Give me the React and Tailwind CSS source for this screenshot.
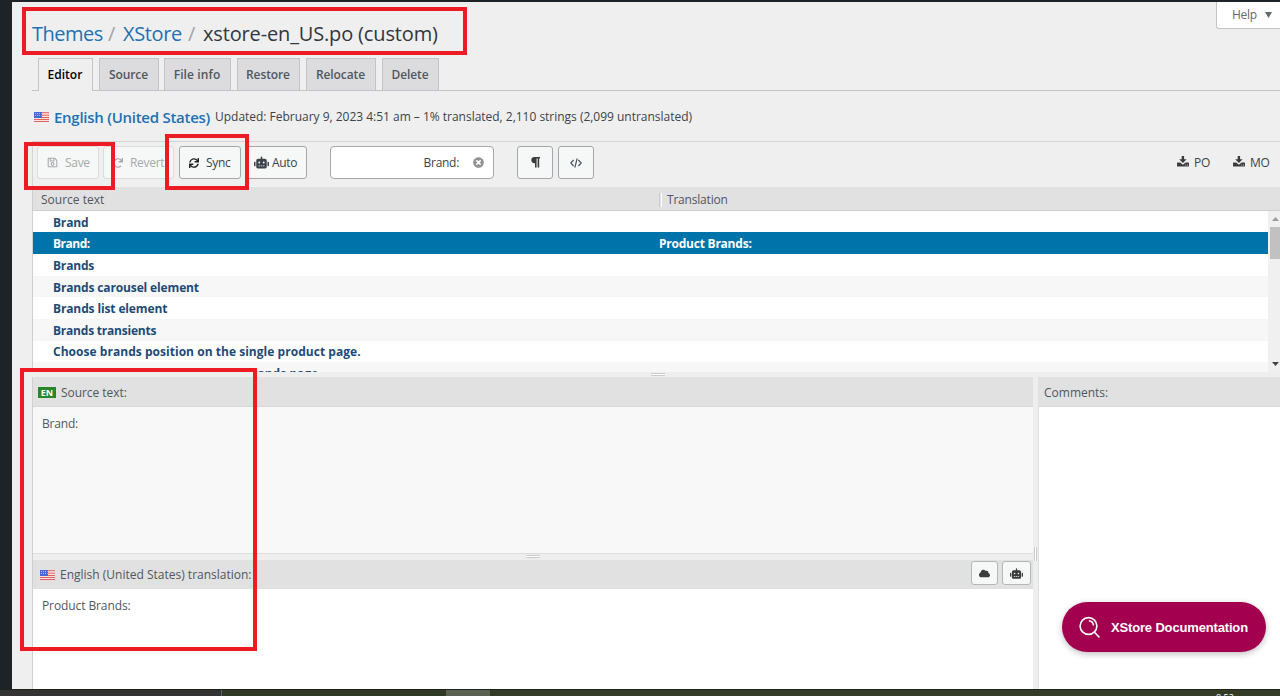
import React from "react";
import { FaRegSave, FaRedo, FaSync, FaRobot, FaTimesCircle, FaCloud } from "react-icons/fa";

function Flag() {
  return (
    <svg width="15" height="10" viewBox="0 0 15 10" className="block shrink-0">
      <rect width="15" height="10" fill="#f6e4e4" />
      <path d="M0 .7H15M0 3.2H15M0 5.5H15M0 7.5H15M0 9.5H15" stroke="#e2615c" strokeWidth="1" />
      <rect width="8" height="6" fill="#4668d8" />
      <path d="M1 1.5H7.5M1 3.5H7.5" stroke="#a9bcf5" strokeWidth="1" strokeDasharray="1 1" />
    </svg>
  );
}

function Download() {
  return (
    <svg width="12" height="11" viewBox="0 0 12 11" className="block shrink-0" fill="#3c3c3c">
      <path d="M4.7 0H7.1V3.2H9.6L5.9 7 2.2 3.2H4.7Z" />
      <path d="M.6 6.5H3.2L5.9 8.8 8.6 6.5H11.4Q12 6.5 12 7.1V10Q12 10.6 11.4 10.6H.6Q0 10.6 0 10V7.1Q0 6.5.6 6.5Z" />
      <path d="M8.3 9H9.2M10 9H10.9" stroke="#efefef" strokeWidth=".8" />
    </svg>
  );
}

const tabs = [
  ["Source", "w-[60px] ml-[6px] tracking-[-0.1px]"],
  ["File info", "w-[67px] ml-[5px] tracking-[0.1px]"],
  ["Restore", "w-[63px] ml-[6px] tracking-[-0.1px]"],
  ["Relocate", "w-[70px] ml-[6px] tracking-[-0.1px]"],
  ["Delete", "w-[57px] ml-[6px] tracking-[-0.1px]"],
];

const rows = [
  ["Brand", "h-[21px] bg-white tracking-[-0.19px] pt-[2px]"],
  ["Brand:", "h-[22px] bg-[#0073aa] text-white tracking-[-0.5px] pt-px", "tracking-[-0.23px]", "Product Brands:"],
  ["Brands", "h-[22px] bg-white tracking-[-0.19px] pt-px"],
  ["Brands carousel element", "h-[21px] bg-[#f7f7f7] tracking-[-0.14px] pt-[2px]"],
  ["Brands list element", "h-[22px] bg-white tracking-[-0.13px] pt-px"],
  ["Brands transients", "h-[22px] bg-[#f7f7f7] tracking-[-0.22px] pt-px"],
  ["Choose brands position on the single product page.", "h-[21px] bg-white tracking-[0.035px] pt-px"],
  ["Choose sidebar position for the brands page.", "h-[22px] bg-[#f7f7f7] tracking-[0.035px] pt-px"],
];

const btn = "flex items-center h-[33px] rounded-[3px] border bg-[#f6f7f7] text-[12px] shrink-0";

export default function App() {
  return (
    <div className="relative flex h-[696px] w-[1280px] flex-col overflow-hidden whitespace-nowrap bg-[#efefef] font-['Open_Sans','Noto_Sans',sans-serif] text-[12px] leading-none text-[#50575e]">
      <div className="h-[2px] shrink-0 bg-[#1d2327]" />
      <div className="flex h-[687px] shrink-0">
        <aside className="w-[12px] shrink-0 bg-[#1d2327]" />
        <main className="flex w-[1268px] flex-col pl-[20px]">
          <header className="flex h-[56px] shrink-0 justify-between">
            <h1 className="flex h-[64px] items-center text-[20px] text-[#32373c]">
              <span className="w-[76px] tracking-[-0.5px] text-[#2271b1]">Themes</span>
              <span className="w-[15px] text-[#a0a5aa]">/</span>
              <span className="w-[65px] tracking-[-0.35px] text-[#2271b1]">XStore</span>
              <span className="w-[15px] text-[#a0a5aa]">/</span>
              <span className="tracking-[-0.15px]">xstore-en_US.po (custom)</span>
            </h1>
            <div className="flex h-[27px] w-[64px] items-center gap-[8px] rounded-bl-[3px] border-b border-l border-[#c3c4c7] bg-white pl-[15px] text-[12px] tracking-[-0.3px] text-[#646970]">
              Help
              <svg width="7" height="6" viewBox="0 0 7 6" fill="#646970"><path d="M0 0H7L3.5 6Z" /></svg>
            </div>
          </header>
          <nav className="flex h-[33px] shrink-0 items-end border-b border-[#c3c4c7] pl-[6px] text-[12px] font-semibold">
            <div className="-mb-px flex h-[33px] w-[55px] items-center justify-center border border-b-0 border-[#c3c4c7] bg-[#efefef] pr-px text-black">Editor</div>
            {tabs.map(([t, c]) => (
              <div key={t} className={"flex h-[32px] items-center justify-center border border-b-0 border-[#c3c4c7] bg-[#dcdcde] pr-px " + c}>{t}</div>
            ))}
          </nav>
          <div className="flex h-[50px] shrink-0 items-center pb-0 pl-[2px] pt-[2px] text-[#3c434a]">
            <Flag />
            <span className="ml-[5px] w-[161px] text-[15px] font-semibold tracking-[-0.27px] text-[#2271b1]">English (United States)</span>
            <span className="text-[12px] tracking-[-0.015px]">Updated: February 9, 2023 4:51 am – 1% translated, 2,110 strings (2,099 untranslated)</span>
          </div>
          <div className="flex h-[46px] shrink-0 items-start border-l border-t border-[#d5d5d5] pl-[4px] pt-[4px] tracking-[-0.3px] text-[#3c434a]">
            <button className={btn + " w-[62px] gap-[7px] border-[#dcdcde] pl-[9px] text-[#a7aaad]"}><FaRegSave size={11} />Save</button>
            <button className={btn + " ml-[4px] w-[71px] gap-[7px] border-[#dcdcde] pl-[9px] text-[#a7aaad]"}><FaRedo size={10} />Revert</button>
            <button className={btn + " ml-[5px] w-[62px] gap-[7px] border-[#a5a7aa] pl-[9px]"}><FaSync size={10} className="text-[#222]" />Sync</button>
            <button className={btn + " ml-[4px] w-[62px] gap-[3px] border-[#a5a7aa] pl-[8px]"}><FaRobot size={15} />Auto</button>
            <div className="ml-[23px] flex h-[33px] w-[164px] shrink-0 items-center justify-end gap-[14px] rounded-[4px] border border-[#a5a7aa] bg-white pr-[9px]">Brand:<FaTimesCircle size={11} className="text-[#929292]" /></div>
            <button className={btn + " ml-[23px] w-[36px] justify-center border-[#a5a7aa]"}>
              <svg width="9" height="11" viewBox="0 0 9 11"><path fill="#3c3c3c" d="M9 0V1.4H8.2V10.5H6.6V1.4H5.6V10.5H4V6.2H3.4A3.1 3.1 0 0 1 3.4 0Z" /></svg>
            </button>
            <button className={btn + " ml-[5px] w-[36px] justify-center border-[#a5a7aa]"}>
              <svg width="12" height="10" viewBox="0 0 12 10" fill="none" stroke="#50575e" strokeWidth="1.2"><path d="M3.6 2L.8 5 3.6 8M8.4 2L11.2 5 8.4 8M7.2.5L4.8 9.5" /></svg>
            </button>
            <div className="ml-auto flex h-[33px] items-center pr-[10px]">
              <span className="pb-[3px]"><Download /></span>
              <span className="ml-[5px] w-[39px]">PO</span>
              <span className="pb-[3px]"><Download /></span>
              <span className="ml-[5px] w-[20px]">MO</span>
            </div>
          </div>
          <section className="flex h-[185px] shrink-0 flex-col border-l border-[#d0d0d0]">
            <div className="flex h-[24px] shrink-0 items-center border-b border-[#cfcfcf] bg-[#e1e1e1] pt-[3px]">
              <span className="w-[626px] pl-[8px]">Source text</span>
              <span className="mr-[5px] h-[14px] w-[3px] border-x border-l-[#ccc] border-r-white" />
              <span className="tracking-[-0.2px]">Translation</span>
            </div>
            <div className="flex h-[161px]">
              <div className="w-[1235px] shrink-0 overflow-hidden font-bold text-[#1d4b78]">
                {rows.map(([t, c, k, tr]) => (
                  <div key={t} className={"flex items-center text-[12px] " + c}>
                    <span className="w-[626px] pl-[20px]">{t}</span>
                    <span className={k}>{tr}</span>
                  </div>
                ))}
              </div>
              <div className="flex w-[12px] flex-col items-center bg-[#f0f0f0] pl-[2px] pt-[6px]">
                <svg width="7" height="4" viewBox="0 0 7 4" className="shrink-0" fill="#9b9b9b"><path d="M0 4H7L3.5 0Z" /></svg>
                <div className="mt-[6px] h-[32px] w-full shrink-0 bg-[#c1c1c1]" />
                <svg width="7" height="4" viewBox="0 0 7 4" className="mb-[6px] mt-auto shrink-0" fill="#444"><path d="M0 0H7L3.5 4Z" /></svg>
              </div>
            </div>
          </section>
          <div className="flex h-[5px] shrink-0 bg-[#eee] pl-[619px] pt-px">
            <div className="h-[3px] w-[14px] border-y border-[#ccc] bg-white" />
          </div>
          <div className="flex h-[312px] shrink-0 border-l border-[#d0d0d0]">
            <section className="flex w-[1000px] shrink-0 flex-col">
              <div className="flex h-[30px] shrink-0 items-center border-b border-[#d8d8d8] bg-[#e1e1e1] pl-[5px] pt-[2px]">
                <span className="flex h-[11px] w-[18px] items-center justify-center bg-[#26882b] text-[9px] font-bold text-white">EN</span>
                <span className="ml-[5px] tracking-[-0.05px]">Source text:</span>
              </div>
              <div className="h-[147px] shrink-0 border-b border-[#ddd] bg-[#f8f8f8] pl-[9px] pt-[11px] tracking-[-0.2px]">Brand:</div>
              <div className="flex h-[6px] shrink-0 bg-[#eee] pl-[493px] pt-px">
                <div className="h-[3px] w-[14px] border-y border-[#ccc] bg-white" />
              </div>
              <div className="flex h-[29px] shrink-0 items-center bg-[#e1e1e1] pl-[7px] pr-[2px]">
                <Flag />
                <span className="ml-[5px]">English (United States) translation:</span>
                <button className="-mt-[3px] ml-auto flex h-[24px] w-[27px] items-center justify-center rounded-[3px] border border-[#b5b7b9] bg-[#f6f7f7] text-[#3c3c3c]"><FaCloud size={11} /></button>
                <button className="-mt-[3px] ml-[4px] flex h-[24px] w-[29px] items-center justify-center rounded-[3px] border border-[#b5b7b9] bg-[#f6f7f7] text-[#3c3c3c]"><FaRobot size={13} /></button>
              </div>
              <div className="h-[100px] shrink-0 bg-white pl-[9px] pt-[11px] tracking-[-0.1px]">Product Brands:</div>
            </section>
            <div className="flex w-[6px] shrink-0 items-start border-r border-[#e0e0e0] bg-[#eee] pl-px pt-[170px]">
              <div className="h-[14px] w-[3px] border-x border-[#ccc] bg-white" />
            </div>
            <section className="flex w-[241px] shrink-0 flex-col">
              <div className="flex h-[30px] shrink-0 items-center border-b border-[#d8d8d8] bg-[#e1e1e1] pl-[5px] pt-[2px]">Comments:</div>
              <div className="grow bg-white" />
            </section>
          </div>
        </main>
      </div>
      <footer className="flex h-[7px] shrink-0 overflow-hidden border-t border-[#20251a] bg-[#343b26]">
        <div className="w-[222px] shrink-0 border-r border-[#666] bg-[#333]" />
        <div className="w-[224px] shrink-0 bg-[#303923]" />
        <div className="w-[44px] shrink-0 bg-[#5b6152]" />
        <div className="ml-auto w-[64px] shrink-0 pt-[3px] text-[9px] text-white">8:52</div>
      </footer>

      <a className="absolute left-[1062px] top-[602px] flex h-[50px] w-[204px] items-center rounded-full bg-[#a3004f] pl-[17px] pt-px font-['Liberation_Sans',sans-serif] text-[13px] font-bold tracking-[-0.16px] text-white shadow-[0_2px_6px_rgba(0,0,0,0.25)]">
        <svg width="22" height="23" viewBox="0 0 22 23" fill="none" stroke="white" strokeWidth="1.6" className="mr-[10px] shrink-0">
          <circle cx="9.5" cy="10" r="8.4" />
          <path d="M15.2 16L20.5 21.5M9.8 4.8A5.2 5.2 0 0 1 14.5 9.5" />
        </svg>
        XStore Documentation
      </a>
      <div className="absolute left-[22px] top-[7px] h-[48px] w-[445px] border-4 border-[#ed1c24]" />
      <div className="absolute left-[24px] top-[142px] h-[48px] w-[91px] border-4 border-[#ed1c24]" />
      <div className="absolute left-[165px] top-[134px] h-[56px] w-[84px] border-4 border-[#ed1c24]" />
      <div className="absolute left-[20px] top-[368px] h-[283px] w-[237px] border-4 border-[#ed1c24]" />
    </div>
  );
}
